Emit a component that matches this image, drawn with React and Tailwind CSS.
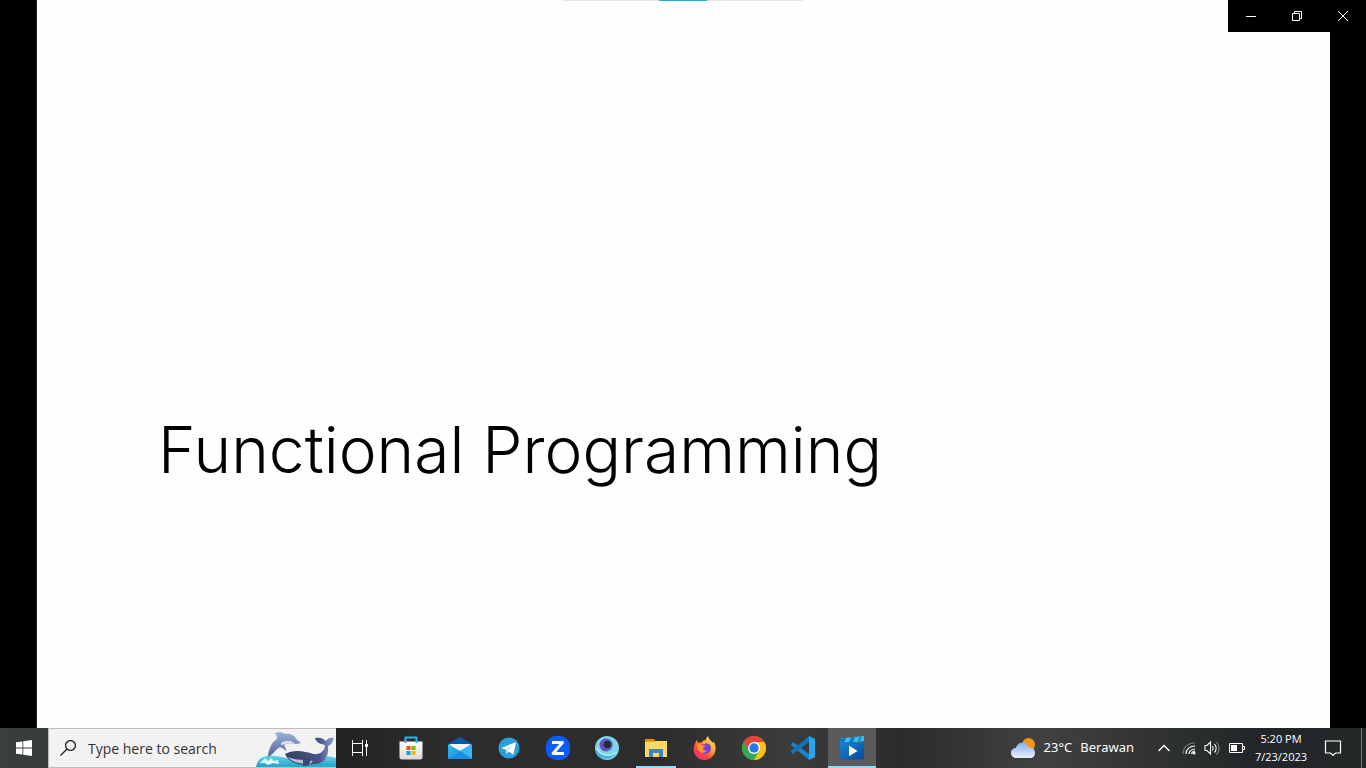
import React from "react";

function Store() {
  return (
    <svg viewBox="0 0 24 24" className="size-6">
      <defs><linearGradient id="bag" x1="0" y1="0" x2="0" y2="1"><stop stopColor="#fff" /><stop offset="1" stopColor="#d9d9d9" /></linearGradient></defs>
      <path d="M.5 5.5h23v15.5a2.5 2.5 0 0 1-2.5 2.5H3A2.5 2.5 0 0 1 .5 21z" fill="url(#bag)" />
      <path d="M6.500 7V1.500h11V7" fill="none" stroke="#2db5e9" strokeWidth="2" strokeLinejoin="round" />
      <path d="M7.500 10h4v4h-4z" fill="#f25022" /><path d="M12.500 10h4v4h-4z" fill="#7fba00" />
      <path d="M7.500 15h4v4h-4z" fill="#00a4ef" /><path d="M12.500 15h4v4h-4z" fill="#ffb900" />
    </svg>
  );
}

function Mail() {
  return (
    <svg viewBox="0 0 24 24" className="size-6">
      <defs><linearGradient id="env" x1="0" y1="0" x2="1" y2="1"><stop stopColor="#33baf0" /><stop offset="1" stopColor="#1683df" /></linearGradient></defs>
      <path d="M0 8 12 1l12 7v7H0z" fill="#0859ad" />
      <path d="M2 8h20v7l-10 3L2 15z" fill="#f2f3f6" />
      <path d="M0 8l12 7 12-7v15H0z" fill="url(#env)" />
      <path d="M12 15 24 8v15z" fill="#37b7f3" /><path d="M12 15 24 23H0z" fill="#1b8fe5" />
    </svg>
  );
}

function Telegram() {
  return (
    <svg viewBox="0 0 24 24" className="size-6">
      <circle cx="12" cy="12" r="10.500" fill="#2ba1da" />
      <path d="M4.500 12 18 6.500c.7-.2 1 .2.800.9l-2.200 10.300c-.2.800-.8.900-1.400.4L11.800 15.600l-1.700 1.700c-.4.400-.8.200-.8-.4V14z" fill="#fff" />
      <path d="M9.300 14 16 8.700l-5.200 5.800-1 2.700z" fill="#a9cfe6" />
    </svg>
  );
}

function ZApp() {
  return (
    <svg viewBox="0 0 24 24" className="size-6">
      <rect width="24" height="24" rx="10" fill="#0b5cff" />
      <path d="M6 6.500h10.500L7 17.500h11" fill="none" stroke="#fff" strokeWidth="2.900" strokeLinejoin="round" />
    </svg>
  );
}

function Wave() {
  return (
    <svg viewBox="0 0 24 24" className="size-6">
      <circle cx="12" cy="12" r="12" fill="#7fd3ec" />
      <path d="M1 14c5 7 14 8 21 1a12 12 0 0 1-20 4z" fill="#48b2df" />
      <path d="M2 12c3 7 12 10 20 4" fill="none" stroke="#b3f1f7" strokeWidth="1.500" />
      <circle cx="11" cy="9" r="6.500" fill="#6a4cc4" />
      <path d="M11 2.500a6.500 6.500 0 0 1 6.500 7c-1 4-4 6-7 5.500 7-3 7-8 .5-12.500" fill="#3a7ed0" />
      <circle cx="12.500" cy="8.500" r="3.800" fill="#292c30" />
    </svg>
  );
}

function Folder() {
  return (
    <svg viewBox="0 0 24 24" className="size-6">
      <path d="M1 3h9l2 3H1z" fill="#d99000" /><path d="M1 5h22v16H1z" fill="#ffd766" />
      <path d="M1 5h10v1H1z" fill="#eba500" />
      <path d="M5 13h14v8h-4v-4H9v4H5z" fill="#3989ca" />
    </svg>
  );
}

function Firefox() {
  return (
    <svg viewBox="0 0 24 24" className="size-6">
      <defs><linearGradient id="fox" x1="1" y1="0" x2=".2" y2="1"><stop stopColor="#fff052" /><stop offset=".4" stopColor="#ffae2d" /><stop offset=".68" stopColor="#ff5038" /><stop offset="1" stopColor="#ee2182" /></linearGradient></defs>
      <path d="M3.400 4 5.500 7c1-.4 2-.5 3-.3C10 5 10.600 4 13 4c0-1.500.5-2.800 2-4 .6 3 3 4.600 5 7l.5-1.500c5.500 9-.6 18.500-8.700 18.500C5 24 .6 19 .6 13.200.6 9.500 2 8 3.400 4z" fill="url(#fox)" />
      <path d="M7 9c4 0 4-2 7-1.500 3 .4 4.500 3 3.800 6-.8 3.600-4 5-7.200 4-3-.9-4.500-4-3.600-8.500" fill="#7544d5" />
      <path d="M3.500 9c2-2 4-1 5 .5l4 .1c-.4 1.500-2 2-2.500 2.300 0 2 1.500 3 4 2.400-2 3.500-8 3.200-9.500-1.300" fill="#ff9430" />
    </svg>
  );
}

function Chrome() {
  return (
    <svg viewBox="0 0 24 24" className="size-6">
      <circle cx="12" cy="12" r="12" fill="#34a853" />
      <path d="M1.600 6A12 12 0 0 1 22.400 6H12l-5.200 9z" fill="#ea4335" />
      <path d="M22.400 6A12 12 0 0 1 12 24l5.200-9L12 6z" fill="#fbc116" />
      <path d="M1.600 6 6.800 15l5.200 3-.2 6A12 12 0 0 1 1.600 6" fill="#34a853" />
      <circle cx="12" cy="12" r="6" fill="#fff" /><circle cx="12" cy="12" r="4.700" fill="#2878e8" />
    </svg>
  );
}

function Code() {
  return (
    <svg viewBox="0 0 24 24" className="size-6">
      <path d="M0 8.200 2 6l16 12v6L.3 9.300q-.6-.5-.3-1.100z" fill="#1683cb" />
      <path d="M0 15.800 2 18 18 6V0L.3 14.700q-.6.500-.3 1.100z" fill="#0f74b8" />
      <path d="M18 0 24 3v18l-6 3z" fill="#2ba6ed" />
    </svg>
  );
}

function Movies() {
  return (
    <svg viewBox="0 0 24 24" className="size-6">
      <defs><linearGradient id="film" x1="0" y1="0" x2="1" y2="1"><stop stopColor="#1686d6" /><stop offset="1" stopColor="#0a4898" /></linearGradient></defs>
      <path d="M0 2.500 24 0v5L0 8z" fill="#39bfed" />
      <path d="M0 2.500 6 2 4 7 0 8zM11 1.500 15 1l-2 5-4 .5zM20 .5l1.500-.2L20 5l-2 .3z" fill="#1676bd" />
      <path d="M0 6h24v16a1.500 1.500 0 0 1-1.500 1.500h-21A1.500 1.500 0 0 1 0 22z" fill="url(#film)" />
      <path d="M9 9.500v10.800l8.500-5.400z" fill="#fff" />
    </svg>
  );
}

function Dolphins() {
  return (
    <svg viewBox="0 0 80 38" className="h-[38px] w-20 shrink-0">
      <defs>
        <linearGradient id="sea" x1="0" y1="0" x2="0" y2="1"><stop stopColor="#65d5e8" /><stop offset="1" stopColor="#249fc6" /></linearGradient>
        <linearGradient id="fin" x1="0" y1="0" x2="0" y2="1"><stop stopColor="#9cb0dc" /><stop offset="1" stopColor="#536399" /></linearGradient>
        <linearGradient id="whale" x1="0" y1="0" x2="1" y2="0"><stop stopColor="#384161" /><stop offset=".7" stopColor="#485584" /><stop offset="1" stopColor="#8ba0d6" /></linearGradient>
      </defs>
      <path d="M0 38C2 28 8 26 20 27c17 2 23 8 36 3 9-3 17-3 24-1v9z" fill="url(#sea)" />
      <path d="M4 34l5-5 3 3 3-3 3 3 4-1 1 4-6-1-5 2-3-2z" fill="#dffaff" />
      <path d="M12 27c1-7 3-13 9-17 0-3-1-5-2-6 4-1 7-1 10 1 6-1 10 2 12 6l4 3-5 1c-4-1-8-1-12 1l3 6-7-4c-4 2-6 6-9 8-1 1-2 2-3 1z" fill="url(#fin)" />
      <path d="M25 14c5-3 10-3 14 1-6-1-9 0-14 1z" fill="#dce1ef" />
      <path d="M29 25c8-5 20-3 28 0 7 1 12-3 12-9-5-1-9-3-10-7 5-1 8 0 11 3 2-3 4-4 8-3-1 4-3 7-6 8 1 10-3 17-12 18l-10 1c-9 0-18-4-21-11z" fill="url(#whale)" />
      <path d="M32 28c8 4 17 2 25 4l-3 3c-10 0-18-2-22-7" fill="#b7c2dd" />
      <path d="M47 28l8 2-2 6-6 2z" fill="#3c486e" />
      <path d="M4 38c19-5 29 1 44-1s21-3 32-1v2z" fill="#2faacf" />
    </svg>
  );
}

const apps = [
  ["Microsoft Store", Store], ["Mail", Mail], ["Telegram", Telegram], ["Zoom", ZApp], ["Browser", Wave],
  ["File Explorer", Folder], ["Firefox", Firefox], ["Google Chrome", Chrome], ["Visual Studio Code", Code], ["Movies & TV", Movies],
];

function Taskbar() {
  return (
    <footer className="flex h-10 shrink-0 items-stretch bg-[linear-gradient(90deg,#3a3f3e_0%,#373b3a_4%,#222423_25%,#2d2d2d_33%,#2c2c2c_48%,#3c3c3c_58%,#2b2b2b_66%,#414141_76%,#303232_85%,#222628_92%,#252829_100%)] font-['Noto_Sans','Open_Sans',sans-serif] text-white">
      <button aria-label="Start" className="grid w-12 place-items-center">
        <svg viewBox="0 0 16 16" className="size-4" fill="#fff"><path d="M0 2.300 6.500 1.400v6.200H0zM7.300 1.300 16 0v7.600H7.300zM0 8.400h6.500v6.200L0 13.700zM7.300 8.400H16V16l-8.700-1.300z" /></svg>
      </button>
      <label className="flex w-72 items-center border border-r-0 border-[#bdbdbd] bg-[#f2f2f2] pl-[11px]">
        <svg viewBox="0 0 16 16" className="size-4 shrink-0" fill="none" stroke="#1f1f1f" strokeWidth="1.300"><circle cx="10.500" cy="5.500" r="4.900" /><path d="M7 9 .5 15.500" /></svg>
        <input aria-label="Search" placeholder="Type here to search" className="ml-3 w-36 min-w-0 flex-1 bg-transparent pt-0.5 font-['Open_Sans','Noto_Sans',sans-serif] text-sm text-[#333] outline-none placeholder:text-[#333]" />
        <Dolphins />
      </label>
      <button aria-label="Task View" className="grid w-12 place-items-center">
        <svg viewBox="0 0 18 16" className="h-4 w-[18px]" fill="none" stroke="#fff" strokeWidth="1"><path d="M1.500 0v3.500h10V0M1.500 16v-3.500h10V16M1.500 3.500v9M11.500 3.500v9M15.500 0v16" /><path d="M14 4h3v3h-3z" fill="#fff" stroke="none" /></svg>
      </button>
      <nav aria-label="Applications" className="ml-[3px] flex gap-px">
        {apps.map(([name, Icon]) => (
          <button key={name} aria-label={name} className={"grid w-12 place-items-center " + (name === "Movies & TV" ? "bg-[#5b5b5b] shadow-[inset_0_-2px_#92dcfa]" : name === "File Explorer" ? "bg-[linear-gradient(#92dcfa,#92dcfa)] bg-[length:40px_2px] bg-bottom bg-no-repeat" : "")}><Icon /></button>
        ))}
      </nav>
      <div className="ml-auto flex items-center">
        <button className="mr-5 flex items-center text-[13px]">
          <svg viewBox="0 0 25 22" className="mr-2 h-[22px] w-[25px]">
            <defs><linearGradient id="cloud" x1="0" y1="0" x2="0" y2="1"><stop stopColor="#8aafe9" /><stop offset="1" stopColor="#e9f1ff" /></linearGradient></defs>
            <circle cx="17.500" cy="7.500" r="6.500" fill="#f79718" />
            <path d="M5.500 21C2.500 21 0 19 0 16s2-5 5-5c1-4 4-6 7-5 3 0 5 2 6 5 4-1 6 1 6 5 0 3-2 5-5 5z" fill="url(#cloud)" />
            <path d="M5 11c4-1 6 0 8 3 2-2 3-3 5-3" fill="none" stroke="#b3cdf5" />
          </svg>
          <span>23°C</span><span className="ml-2">Berawan</span>
        </button>
        <button aria-label="Show hidden icons" className="mr-2"><svg viewBox="0 0 20 20" className="size-5" fill="none" stroke="#fff" strokeWidth="1.300"><path d="m4.500 13 5.500-5.500 5.500 5.500" /></svg></button>
        <button aria-label="Network" className="mr-2"><svg viewBox="0 0 14 14" className="size-3.5" fill="none" stroke="#fff" strokeWidth="1.200"><path d="M1 13C1 6 6 2 13 2" stroke="#777" /><path d="M4 13c0-5 4-8 9-8M7 13c0-3 3-5 6-5M9.500 13c0-1.500 2-3 3.500-3" /><circle cx="12" cy="12" r="1.500" fill="#fff" stroke="none" /></svg></button>
        <button aria-label="Volume" className="mr-2"><svg viewBox="0 0 17 16" className="h-4 w-[17px]" fill="none" stroke="#fff" strokeWidth="1.100"><path d="M1 5.500h2L6.500 2v12L3 10.500H1zM8.500 6c1 1.500 1 3 0 4.500M10.500 4c2 2.500 2 6 0 8.500" /><path d="M12.500 2c3.500 4 3.500 9 0 12.500" stroke="#888" /></svg></button>
        <button aria-label="Battery" className="mr-2"><svg viewBox="0 0 16 10" className="h-2.5 w-4" fill="none" stroke="#fff"><path d="M.5.5h13v9H.500zM13.500 3.500h2v3h-2" /><path d="M2 2h6v6H2z" fill="#fff" stroke="none" /></svg></button>
        <button className="w-14 whitespace-nowrap text-center font-['Open_Sans','Noto_Sans',sans-serif] text-[11px] leading-[18px]"><time className="flex flex-col items-center"><span>5:20 PM</span><span>7/23/2023</span></time></button>
        <button aria-label="Notifications" className="ml-[15px] mr-[19px]"><svg viewBox="0 0 18 18" className="size-[18px]" fill="none" stroke="#fff" strokeWidth="1.200"><path d="M1.500 2h15v12h-5L9 16.500 6.500 14h-5z" /></svg></button>
        <button aria-label="Show desktop" className="h-10 w-[5px] border-l border-[#777]" />
      </div>
    </footer>
  );
}

const backdrop = [
  {
    place: "left-[21px] top-[20px] text-[30px] leading-[54px]",
    code: "for (let i = 0; i < 10; i++) {\n  console.log(i);\n}",
  },
  {
    place: "left-[318px] top-[167px] text-[28px] leading-[48px]",
    code: "function repeatLog(n) {\n  for (let i = 0; i < n; i++) {\n    console.log(i);\n  }\n}",
  },
  {
    place: "left-[728px] top-[335px] text-[27px] leading-[46px]",
    code: "function repeat(n, action) {\n  for (let i = 0; i < n; i++) {\n    action(i);\n  }\n}\n\nrepeat(3, console.log);",
  },
];

export default function App() {
  return (
    <div className="flex h-screen flex-col overflow-hidden bg-black">
      <main className="relative mx-9 flex min-h-0 flex-1 items-center overflow-hidden bg-[#fefefe] shadow-[inset_1px_0_#222]">
        {backdrop.map(({ place, code }) => (
          <pre key={place} className={"absolute font-['Liberation_Mono',monospace] font-bold text-white " + place}>{code}</pre>
        ))}
        <div className="absolute inset-x-0 top-0 flex justify-center"><div className="flex h-px w-60 justify-center bg-[#e5e5e5]"><div className="w-12 bg-[#28a8cf]" /></div></div>
        <h1 className="relative mt-[172px] whitespace-nowrap pl-[122px] font-['Inter','Liberation_Sans',sans-serif] text-[64px] leading-[80px] font-light text-black">Functional Programming</h1>
      </main>
      <div className="absolute right-0 top-0 flex h-8 bg-black">
        <button aria-label="Minimize" className="grid w-[46px] place-items-center"><svg viewBox="0 0 10 10" className="size-2.5" stroke="#fff"><path d="M0 5.500h10" /></svg></button>
        <button aria-label="Restore" className="grid w-[46px] place-items-center"><svg viewBox="0 0 10 10" className="size-2.5" fill="none" stroke="#fff"><path d="M.5 2.500h7v7h-7zM2.500 2.500v-2h7v7h-2" /></svg></button>
        <button aria-label="Close" className="grid w-[46px] place-items-center"><svg viewBox="0 0 10 10" className="size-2.5" stroke="#fff"><path d="m0 0 10 10M10 0 0 10" /></svg></button>
      </div>
      <Taskbar />
    </div>
  );
}
